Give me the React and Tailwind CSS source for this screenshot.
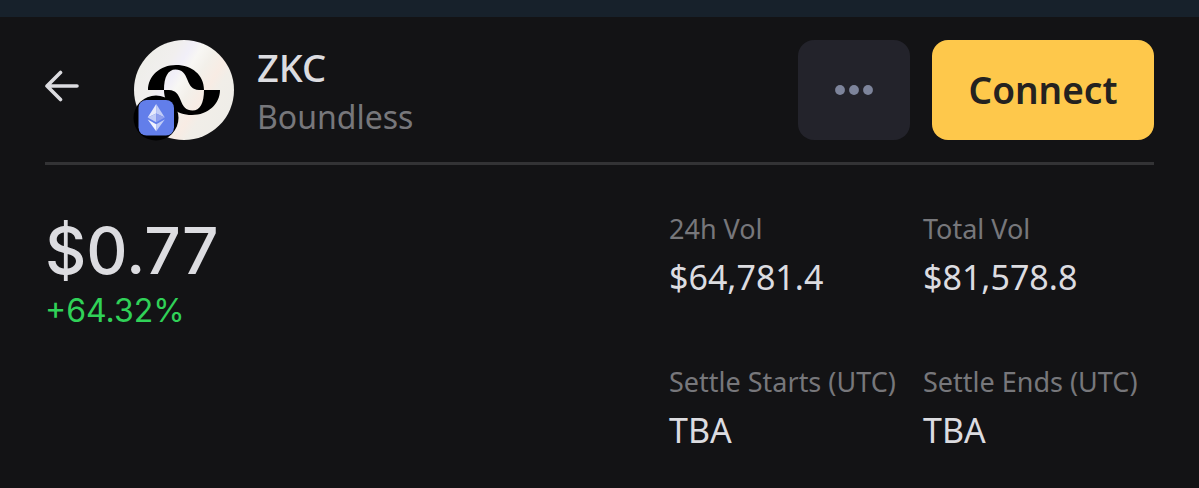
import React from "react";

const stats = [
  { label: "24h Vol", value: "$64,781.4" },
  { label: "Total Vol", value: "$81,578.8" },
  { label: "Settle Starts (UTC)", value: "TBA" },
  { label: "Settle Ends (UTC)", value: "TBA" },
];

const BackIcon = () => (
  <svg width="36" height="32" viewBox="0 0 36 32" fill="none" aria-hidden="true">
    <path
      d="M32 16H2M15.5 2.5L2 16L15.5 29.5"
      stroke="#dcdce0"
      strokeWidth="3.6"
      strokeLinecap="round"
      strokeLinejoin="round"
    />
  </svg>
);

const TokenLogo = () => (
  <svg
    className="shrink-0 overflow-visible"
    width="100"
    height="100"
    viewBox="0 0 100 100"
    role="img"
    aria-label="ZKC"
  >
    <defs>
      <linearGradient id="sheen" x1="0.1" y1="0.25" x2="0.9" y2="0.75">
        <stop offset="0" stopColor="#efeeea" />
        <stop offset="0.2" stopColor="#f1efee" />
        <stop offset="0.32" stopColor="#f1eff8" />
        <stop offset="0.42" stopColor="#f8f7f4" />
        <stop offset="0.55" stopColor="#f3f0ea" />
        <stop offset="0.7" stopColor="#f8ece4" />
        <stop offset="0.8" stopColor="#f1eee8" />
        <stop offset="1" stopColor="#efede8" />
      </linearGradient>
    </defs>
    <circle cx="50" cy="50" r="50" fill="url(#sheen)" />
    {/* Two interlocking waves, the second is the first turned by half */}
    <path
      id="wave"
      d="M14 50C14 36 26 25 42 25C58 25 70 35 70 50H65C58 49.5 56 46 53.5 40C51 33.5 48 29.5 41.5 29.5C34 29.5 30 37 30 50Z"
      fill="#000"
    />
    <use href="#wave" transform="rotate(180 50 50)" />

    {/* Ethereum network badge */}
    <circle cx="22" cy="78" r="22.5" fill="#000" />
    <rect x="4.5" y="60" width="35.5" height="35.5" rx="8" fill="#627eea" />
    <path d="M22.2 64L13.7 77.5L22.2 73.6Z" fill="#e6eafc" />
    <path d="M22.2 64L30.8 77.5L22.2 73.6Z" fill="#c1ccf7" />
    <path d="M22.2 73.6L13.7 77.5L22.2 82.2Z" fill="#c1ccf7" />
    <path d="M22.2 73.6L30.8 77.5L22.2 82.2Z" fill="#8f9fee" />
    <path d="M13.7 79.4L22.2 84.2V91.3Z" fill="#f1f3fe" />
    <path d="M30.8 79.4L22.2 84.2V91.3Z" fill="#c1ccf7" />
  </svg>
);

const MoreIcon = () => (
  <svg width="38" height="10" viewBox="0 0 38 10" fill="#7d849b" aria-hidden="true">
    <circle cx="5" cy="5" r="4.9" />
    <circle cx="19" cy="5" r="4.9" />
    <circle cx="33" cy="5" r="4.9" />
  </svg>
);

const App = () => {
  return (
    <div className="min-h-screen bg-[#131315] font-['Noto_Sans',sans-serif] text-[#dcdce0]">
      <div className="h-[17px] bg-[#17212b]" />

      <main className="px-[45px] pt-[23px]">
        {/* Token header */}
        <header className="flex items-center justify-between border-b-3 border-[#333335] pb-[22px]">
          <div className="flex items-center">
            <button type="button" aria-label="Back" className="mr-[53px] pb-2">
              <BackIcon />
            </button>
            <TokenLogo />
            <div className="ml-[23px]">
              <h1 className="text-[38px] leading-[54px] font-medium">ZKC</h1>
              <p className="text-[32px] leading-[46px] text-[#77777b]">Boundless</p>
            </div>
          </div>

          <div className="flex gap-[22px]">
            <button
              type="button"
              aria-label="More"
              className="flex h-[100px] w-28 items-center justify-center rounded-2xl bg-[#23232b]"
            >
              <MoreIcon />
            </button>
            <button
              type="button"
              className="h-[100px] w-[222px] rounded-2xl bg-[#fec84b] text-[37px] font-semibold text-[#242220]"
            >
              Connect
            </button>
          </div>
        </header>

        {/* Price and market stats */}
        <section className="flex items-start justify-between pt-11">
          <div className="pt-0.5 font-[Inter,sans-serif]">
            <p className="text-[64px] leading-[80px] font-medium">$0.77</p>
            <p className="text-[32px] leading-[40px] text-[#30d158]">+64.32%</p>
          </div>

          <dl className="grid grid-cols-[231px_231px] gap-x-[23px] gap-y-[57px]">
            {stats.map((stat) => (
              <div key={stat.label} className="whitespace-nowrap">
                <dt className="text-[27px] leading-[40px] text-[#77777b]">{stat.label}</dt>
                <dd className="text-[34px] leading-[56px]">{stat.value}</dd>
              </div>
            ))}
          </dl>
        </section>
      </main>
    </div>
  );
};

export default App;
